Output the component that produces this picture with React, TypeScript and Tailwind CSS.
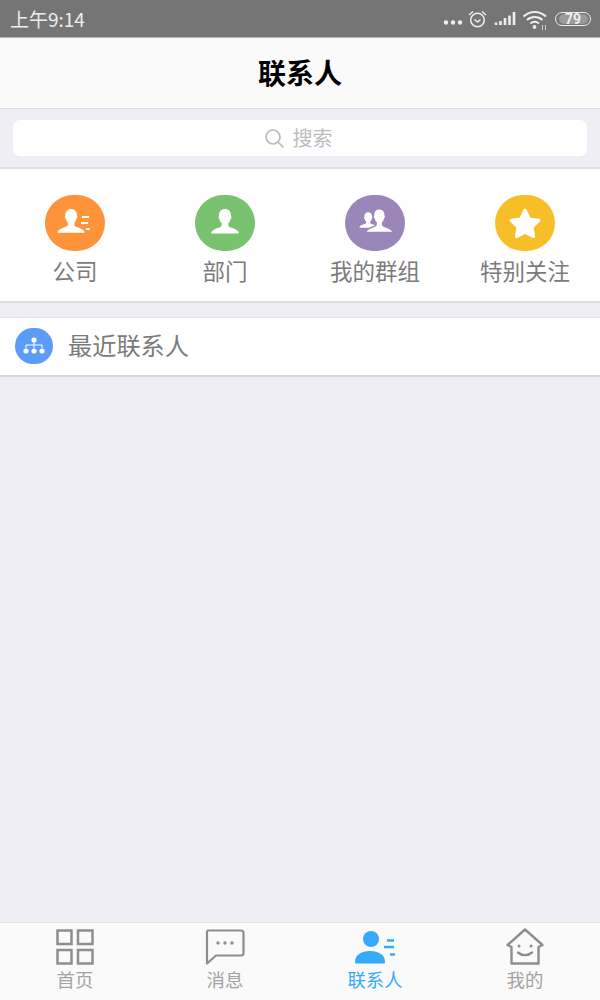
const font = { fontFamily: '"Noto Sans CJK SC", sans-serif' };

const personD = "M12 1.500c-2.900 0-4.500 2-4.500 4.800 0 .6-.5.9-.3 1.800.2.600.5.600.7 1.200.3 1.200.9 2.200 1.600 2.800v1.700c0 .8-1.100 1.300-2.500 1.800-2 .7-4.300 1.500-5.300 3.400-.2.400 0 .8.400.8h19.800c.4 0 .6-.4.400-.8-1-1.900-3.300-2.700-5.300-3.400-1.400-.5-2.500-1-2.500-1.800v-1.700c.7-.6 1.300-1.600 1.600-2.800.2-.6.500-.6.7-1.200.2-.9-.3-1.200-.3-1.800 0-2.800-1.600-4.800-4.500-4.800z";

function Shortcut({ label, color, children }: { label: string; color: string; children: React.ReactNode }) {
  return (
    <div className="flex flex-col items-center">
      <div className={`w-[60px] h-[56px] rounded-full flex items-center justify-center ${color}`}>{children}</div>
      <span className="mt-[5px] text-[22.500px] leading-[28px] text-[#7b7b7b]">{label}</span>
    </div>
  );
}

function Tab({ label, active, children }: { label: string; active?: boolean; children: React.ReactNode }) {
  return (
    <div className="flex flex-col items-center">
      <div className="h-[46px] pt-[2px] flex items-center justify-center">{children}</div>
      <span className={`text-[18.400px] leading-[20px] ${active ? "text-[#36a9f7]" : "text-[#a3a3a3]"}`}>{label}</span>
    </div>
  );
}

export default function App() {
  return (
    <div className="w-[600px] h-[1000px] flex flex-col bg-[#eeeef4] overflow-hidden" style={font}>
      <div className="h-[38px] bg-[#757575] border-b border-[#b5b5b5] flex items-center justify-between pl-[10px] pr-[9px] shrink-0">
        <span className="text-[19px] text-[#eeeeee] leading-none mb-[1px]" style={{ fontFamily: '"Noto Sans CJK SC", Roboto, sans-serif' }}>上午9:14</span>
        <div className="flex items-center gap-[7px]">
          <svg width="105" height="24" viewBox="0 0 105 24" fill="none">
            <circle cx="3" cy="15.500" r="2.200" fill="#eee" /><circle cx="10" cy="15.500" r="2.200" fill="#eee" /><circle cx="17" cy="15.500" r="2.200" fill="#eee" />
            <circle cx="34.500" cy="13" r="6.800" stroke="#eee" strokeWidth="1.500" />
            <path d="M31.500 12.500l3 2.500 3-2.500" stroke="#eee" strokeWidth="1.400" />
            <path d="M26 8l4-3.500M43 8l-4-3.500" stroke="#eee" strokeWidth="1.500" />
            <path d="M53 15.500v2.500M57.500 14v4M62 11v7M66.500 8.500v9.500M71 5v13" stroke="#eee" strokeWidth="2.600" />
            <path d="M80.500 9.500c6.500-6 16-6 22.500 0M84 13c4.500-4 11-4 15.500 0M87.500 16.500c2.500-2 6-2 8.500 0" stroke="#eee" strokeWidth="2" />
            <circle cx="91.500" cy="20" r="1.900" fill="#eee" />
            <path d="M99.500 18v5M102.500 18v5" stroke="#ccc" strokeWidth="1" />
          </svg>
          <div className="relative w-[36px] h-[14px] rounded-full border border-[#eee] flex items-center justify-center">
            <div className="absolute left-[3px] right-[2px] top-[1px] bottom-[1px] rounded-full bg-[#9a9a9a]" />
            <span className="relative text-[14px] font-bold text-[#eee] leading-none" style={{ fontFamily: "Roboto, sans-serif" }}>79</span>
          </div>
        </div>
      </div>
      <div className="h-[71px] shrink-0 bg-[#fafafa] border-b border-[#dcdce0] flex items-center justify-center pb-[2px]">
        <span className="text-[28px] font-bold text-black leading-none">联系人</span>
      </div>
      <div className="h-[60px] shrink-0 border-b-2 border-[#dfdfe3] px-[13px] pt-[11px]">
        <div className="h-[36px] rounded-[7px] bg-white flex items-center justify-center gap-[8px] pr-[4px]">
          <svg width="21" height="21" viewBox="0 0 21 21" fill="none" stroke="#bcbcbc" strokeWidth="1.700">
            <circle cx="9" cy="9" r="7" /><path d="M14 14l5.500 5.500" />
          </svg>
          <span className="text-[20px] text-[#bcbcbc] leading-none">搜索</span>
        </div>
      </div>
      <div className="h-[134px] shrink-0 bg-white border-b-2 border-[#dcdce2] grid grid-cols-4 pt-[26px]">
        <Shortcut label="公司" color="bg-[#ff9339]">
          <svg width="36" height="30" viewBox="0 0 36 30">
            <g transform="translate(-1.500 -1) scale(1.300)"><path d={personD} fill="#fff" /></g>
            <path d="M25 9h7M24 15h7M29 21h4" stroke="#fff" strokeWidth="2" />
          </svg>
        </Shortcut>
        <Shortcut label="部门" color="bg-[#79c26f]">
          <svg width="32" height="32" viewBox="0 0 24 24"><path d={personD} fill="#fff" /></svg>
        </Shortcut>
        <Shortcut label="我的群组" color="bg-[#9b86b9]">
          <svg width="36" height="30" viewBox="0 0 36 30">
            <g transform="translate(1 3) scale(.85)"><path d={personD} fill="#fff" /></g>
            <g transform="translate(7 -1) scale(1.280)"><path d={personD} fill="#fff" stroke="#9b86b9" strokeWidth="1" /></g>
          </svg>
        </Shortcut>
        <Shortcut label="特别关注" color="bg-[#f7bf27]">
          <svg width="34" height="32" viewBox="0 0 32 30"><path d="M16 3l4 8.200 9 1.300-6.500 6.300 1.500 8.900-8-4.200-8 4.200 1.500-8.900-6.500-6.300 9-1.300z" fill="#fff" stroke="#fff" strokeWidth="3" strokeLinejoin="round" /></svg>
        </Shortcut>
      </div>
      <div className="mt-[14px] h-[60px] shrink-0 bg-white border-t border-[#dfdfe4] border-b-2 border-b-[#d8d8dc] flex items-center pl-[15px] pb-[2px]">
        <div className="w-[38px] h-[36px] rounded-full bg-[#5b9cf8] flex items-center justify-center">
          <svg width="22" height="18" viewBox="0 0 22 18" fill="#fff">
            <circle cx="11" cy="3" r="2.600" /><circle cx="3" cy="14" r="2.600" /><circle cx="11" cy="14" r="2.600" /><circle cx="19" cy="14" r="2.600" />
            <path d="M11 5v6M3 11V8h16v3" stroke="#fff" strokeWidth="1" fill="none" />
          </svg>
        </div>
        <span className="ml-[15px] text-[24.200px] text-[#7b7b7b] leading-none">最近联系人</span>
      </div>
      <div className="flex-1" />
      <div className="h-[78px] shrink-0 bg-[#fafafa] border-t border-[#e2e2e8] grid grid-cols-4">
        <Tab label="首页">
          <svg width="38" height="36" viewBox="0 0 38 36" fill="none" stroke="#8e8e8e" strokeWidth="2.500">
            <rect x="1.500" y="1.500" width="14" height="13.500" /><rect x="22" y="1.500" width="14.500" height="13.500" />
            <rect x="1.500" y="21" width="14" height="13.500" /><rect x="22" y="21" width="14.500" height="13.500" />
          </svg>
        </Tab>
        <Tab label="消息">
          <svg width="40" height="36" viewBox="0 0 40 36" fill="none">
            <path d="M3 1.500h33a2.500 2.500 0 0 1 2.500 2.500v20a2.500 2.500 0 0 1-2.500 2.500H11L2 34.500V2.500z" stroke="#8e8e8e" strokeWidth="2.200" strokeLinejoin="round" />
            <circle cx="13" cy="14" r="1.700" fill="#8e8e8e" /><circle cx="20" cy="14" r="1.700" fill="#8e8e8e" /><circle cx="27" cy="14" r="1.700" fill="#8e8e8e" />
          </svg>
        </Tab>
        <Tab label="联系人" active>
          <svg width="41" height="34" viewBox="0 0 41 34" fill="#36a9f7">
            <circle cx="16" cy="9" r="8" />
            <path d="M0 32c0-7 6-11 15-11s15 4 15 11c0 1-.5 1.500-1.500 1.500h-27C.5 33.500 0 33 0 32z" />
            <path d="M32 10.500h7M29 17h10M35 24.500h5" stroke="#36a9f7" strokeWidth="2.400" />
          </svg>
        </Tab>
        <Tab label="我的">
          <svg width="38" height="38" viewBox="0 0 38 38" fill="none" stroke="#8e8e8e" strokeWidth="2.400" strokeLinejoin="round">
            <path d="M19 1.500L1.500 17l4 2v16.500h27V19l4-2z" />
            <circle cx="13" cy="18" r="1.500" fill="#8e8e8e" stroke="none" /><circle cx="25" cy="18" r="1.500" fill="#8e8e8e" stroke="none" />
            <path d="M12 24.500c4 3.500 10 3.500 14 0" strokeLinecap="round" />
          </svg>
        </Tab>
      </div>
    </div>
  );
}
